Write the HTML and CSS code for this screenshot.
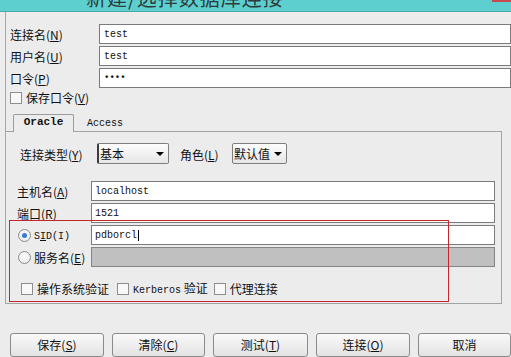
FILE: index.html
```html
<!DOCTYPE html>
<html>
<head>
<meta charset="utf-8">
<link rel="stylesheet" href="styles.css">
</head>
<body>
<div class="titlebar"><span class="title">新建/选择数据库连接</span><span class="close"></span></div>
<div class="main">
  <div class="row"><span class="lbl">连接名(<u>N</u>)</span><div class="field">test</div></div>
  <div class="row"><span class="lbl">用户名(<u>U</u>)</span><div class="field">test</div></div>
  <div class="row"><span class="lbl">口令(<u>P</u>)</span><div class="field pw">••••</div></div>
  <div class="checkrow"><span class="cb"></span><span class="cbtext">保存口令(<u>V</u>)</span></div>

  <div class="tabs">
    <span class="tab-gap"></span>
    <span class="tab active">Oracle</span>
    <span class="tab-rest"><span class="tab-label">Access</span></span>
  </div>
  <div class="panel">
    <div class="comborow">
      <span class="clbl">连接类型(<u>Y</u>)</span>
      <div class="combo c1"><span>基本</span><i class="arrow"></i></div>
      <span class="clbl2">角色(<u>L</u>)</span>
      <div class="combo c2"><span>默认值</span><i class="arrow"></i></div>
    </div>
    <div class="prow first"><span class="plbl">主机名(<u>A</u>)</span><div class="field">localhost</div></div>
    <div class="prow"><span class="plbl">端口(<u>R</u>)</span><div class="field">1521</div></div>
    <div class="prow"><span class="plbl rlbl"><span class="radio on"><span class="dot"></span></span><span><span class="mono">S<u>I</u>D(I)</span></span></span><div class="field"><span class="caret">pdborcl</span></div></div>
    <div class="prow"><span class="plbl rlbl"><span class="radio"></span><span>服务名(<u>E</u>)</span></span><div class="field disabled"></div></div>
    <div class="optrow">
      <span class="cb"></span><span class="opt o1">操作系统验证</span>
      <span class="cb"></span><span class="opt o2"><span class="mono">Kerberos</span> 验证</span>
      <span class="cb"></span><span class="opt">代理连接</span>
    </div>
    <div class="redbox"></div>
  </div>
</div>
<div class="buttons">
  <div class="btn">保存(<u>S</u>)</div>
  <div class="btn">清除(<u>C</u>)</div>
  <div class="btn">测试(<u>T</u>)</div>
  <div class="btn">连接(<u>O</u>)</div>
  <div class="btn">取消</div>
</div>
</body>
</html>
```
FILE: styles.css
```css
* { box-sizing: border-box; }
html, body { margin: 0; padding: 0; }
body {
  width: 511px;
  height: 357px;
  overflow: hidden;
  background: #ececec;
  font-family: "Noto Sans CJK SC", "Noto Sans", sans-serif;
  font-size: 12px;
  color: #111;
}
u { text-decoration: underline; text-underline-offset: 1px; }
.mono { font-family: "Liberation Mono", monospace; font-size: 10px; }

.titlebar {
  height: 12px;
  background: #5ecfcf;
  border-bottom: 1px solid #4aa9a9;
  display: flex;
  overflow: hidden;
}
.title {
  font-size: 20px;
  line-height: 20px;
  margin-top: -12px;
  margin-left: 86px;
  color: #2c3c3c;
  white-space: nowrap;
  letter-spacing: 1px;
}
.close {
  margin-left: auto;
  width: 19px;
  height: 2px;
  background: #c9484f;
}

.main {
  margin-left: 5px;
  border-left: 1px solid #a9a9a9;
  padding-top: 12px;
}
.row {
  display: flex;
  align-items: center;
  height: 20px;
  margin-bottom: 2px;
}
.lbl {
  width: 93px;
  padding-left: 4px;
  padding-top: 2px;
  line-height: 14px;
}
.field {
  flex: 1;
  height: 20px;
  border: 1px solid #7b7b7b;
  background: #fff;
  font-family: "Liberation Mono", monospace;
  font-size: 10px;
  line-height: 19px;
  padding-left: 3px;
}
.row .field { padding-left: 4px; }
.field.pw { font-weight: bold; font-size: 9px; }
.field.disabled { background: #c0c0c0; border-color: #858585; }
.caret { border-right: 1px solid #000; padding-right: 1px; }

.checkrow {
  display: flex;
  align-items: center;
  height: 13px;
  margin-top: 3px;
  padding-left: 4px;
}
.cb {
  width: 12px;
  height: 12px;
  border: 1px solid #8e8e8e;
  background: #f8f8f8;
  flex: none;
}
.cbtext { margin-left: 4px; line-height: 14px; padding-top: 1px; }

.tabs {
  display: flex;
  height: 18px;
  margin-top: 10px;
  margin-right: 9px;
}
.tab-gap { width: 7px; border-bottom: 1px solid #a3a3a3; }
.tab.active {
  width: 61px;
  border: 1px solid #9c9c9c;
  border-bottom: none;
  border-radius: 2px 2px 0 0;
  font-family: "Liberation Mono", monospace;
  font-weight: bold;
  font-size: 11px;
  text-align: center;
  line-height: 15px;
}
.tab-rest {
  flex: 1;
  border-bottom: 1px solid #a3a3a3;
  display: flex;
  align-items: flex-end;
  padding-left: 13px;
}
.tab-label {
  font-family: "Liberation Mono", monospace;
  font-size: 10px;
  line-height: 12px;
  margin-bottom: 1px;
}

.panel {
  position: relative;
  margin-right: 9px;
  border-right: 1px solid #a3a3a3;
  border-bottom: 1px solid #a3a3a3;
  padding-top: 11px;
  padding-bottom: 8px;
}
.comborow {
  display: flex;
  align-items: center;
  height: 21px;
}
.clbl { width: 91px; padding-left: 14px; padding-top: 1px; }
.clbl2 { width: 63px; padding-left: 11px; padding-top: 1px; }
.combo {
  height: 21px;
  border: 1px solid #7e7e7e;
  border-radius: 2px;
  background: linear-gradient(#fdfdfd, #e6e6e6);
  display: flex;
  align-items: center;
  justify-content: space-between;
  padding-left: 1px;
  padding-right: 4px;
}
.combo.c1 { width: 72px; border-left: 2px solid #3b3b3b; }
.combo.c2 { width: 55px; }
.arrow {
  width: 0;
  height: 0;
  border-left: 4px solid transparent;
  border-right: 4px solid transparent;
  border-top: 4px solid #000;
}

.prow {
  display: flex;
  align-items: center;
  height: 20px;
  margin-bottom: 2px;
  padding-right: 6px;
}
.prow.first { margin-top: 17px; }
.plbl { width: 85px; padding-left: 11px; line-height: 14px; padding-top: 1px; }
.rlbl { display: flex; align-items: center; padding-left: 12px; }
.radio {
  width: 13px;
  height: 13px;
  border-radius: 50%;
  border: 1px solid #8c8c8c;
  background: radial-gradient(circle at 50% 40%, #ffffff, #e4e4e4);
  display: flex;
  align-items: center;
  justify-content: center;
  margin-right: 3px;
  flex: none;
}
.dot { width: 5px; height: 5px; border-radius: 50%; background: #3a78d4; }

.optrow {
  display: flex;
  align-items: center;
  height: 13px;
  margin-top: 15px;
  padding-left: 15px;
}
.opt { margin-left: 4px; line-height: 14px; padding-top: 1px; }
.opt.o1 { margin-right: 8px; }
.opt.o2 { margin-right: 6px; }

.redbox {
  position: absolute;
  left: 3px;
  top: 88px;
  width: 440px;
  height: 82px;
  border: 1px solid #c4262e;
}

.buttons {
  display: grid;
  grid-template-columns: 94px 93px 95px 94px 93px;
  column-gap: 8px;
  padding-left: 10px;
  margin-top: 29px;
}
.btn {
  height: 24px;
  border: 1px solid #8b8b8b;
  border-radius: 3px;
  background: linear-gradient(#f9f9f9, #e3e3e3);
  text-align: center;
  line-height: 22px;
}
```
